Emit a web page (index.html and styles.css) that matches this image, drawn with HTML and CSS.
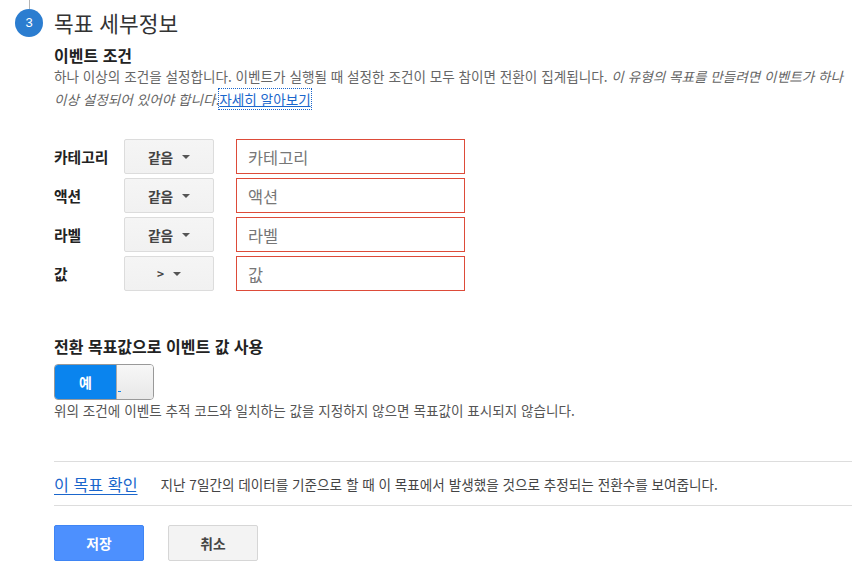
FILE: index.html
```html
<!DOCTYPE html>
<html lang="ko">
<head>
<meta charset="utf-8">
<link rel="stylesheet" href="styles.css">
</head>
<body>
<div class="page">
  <div class="step-head">
    <div class="step-marker">
      <div class="step-line"></div>
      <div class="step-num">3</div>
    </div>
    <h1 class="step-title">목표 세부정보</h1>
  </div>
  <div class="content">
    <h2 class="sec-title">이벤트 조건</h2>
    <p class="desc">하나 이상의 조건을 설정합니다. 이벤트가 실행될 때 설정한 조건이 모두 참이면 전환이 집계됩니다. <em>이 유형의 목표를 만들려면 이벤트가 하나 이상 설정되어 있어야 합니다.</em><a class="learn" href="#">자세히 알아보기</a></p>

    <div class="conds">
      <div class="cond">
        <span class="cond-label">카테고리</span>
        <div class="sel"><span>같음</span><i class="caret"></i></div>
        <div class="inp">카테고리</div>
      </div>
      <div class="cond">
        <span class="cond-label">액션</span>
        <div class="sel"><span>같음</span><i class="caret"></i></div>
        <div class="inp">액션</div>
      </div>
      <div class="cond">
        <span class="cond-label">라벨</span>
        <div class="sel"><span>같음</span><i class="caret"></i></div>
        <div class="inp">라벨</div>
      </div>
      <div class="cond">
        <span class="cond-label">값</span>
        <div class="sel"><span class="gt">&gt;</span><i class="caret"></i></div>
        <div class="inp">값</div>
      </div>
    </div>

    <h2 class="sec-title val-title">전환 목표값으로 이벤트 값 사용</h2>
    <div class="toggle">
      <div class="toggle-on">예</div>
      <div class="toggle-off"><span class="focus-mark"></span></div>
    </div>
    <p class="note">위의 조건에 이벤트 추적 코드와 일치하는 값을 지정하지 않으면 목표값이 표시되지 않습니다.</p>

    <div class="verify">
      <a class="verify-link" href="#">이 목표 확인</a>
      <span class="verify-text">지난 7일간의 데이터를 기준으로 할 때 이 목표에서 발생했을 것으로 추정되는 전환수를 보여줍니다.</span>
    </div>

    <div class="actions">
      <button class="btn btn-primary">저장</button>
      <button class="btn btn-default">취소</button>
    </div>
  </div>
</div>
</body>
</html>
```

FILE: styles.css
```css
* { box-sizing: border-box; }
html, body { margin: 0; padding: 0; background: #fff; }
body {
  font-family: "Noto Sans CJK KR", "Noto Sans", "Liberation Sans", sans-serif;
  color: #333;
}
.page { width: 867px; }

.step-head {
  display: flex;
  align-items: flex-end;
  gap: 11px;
  padding-left: 15px;
}
.step-marker {
  display: flex;
  flex-direction: column;
  align-items: center;
  width: 28px;
}
.step-line { width: 1px; height: 9px; background: #b5b5b5; }
.step-num {
  width: 28px; height: 28px; border-radius: 50%;
  background: #2b7dd0;
  color: #fff;
  font-size: 13px;
  line-height: 28px;
  text-align: center;
  font-family: "Liberation Sans", sans-serif;
}
.step-title {
  margin: 0;
  font-size: 21.4px;
  font-weight: 400;
  line-height: 28px;
  color: #333;
}

.content { padding-left: 54px; padding-right: 15px; }
.sec-title {
  margin: 8px 0 0;
  font-size: 16px;
  line-height: 20px;
  font-weight: 700;
  color: #222;
}
.desc {
  margin: 0;
  font-size: 13.6px;
  line-height: 23px;
  color: #666;
}
.desc em { font-style: italic; }
.learn {
  color: #1a66cc;
  text-decoration: underline;
  outline: 1px dotted #1a66cc;
  outline-offset: 0;
}

.conds {
  margin-top: 28px;
  display: flex;
  flex-direction: column;
  gap: 4px;
}
.cond { display: flex; align-items: center; }
.cond-label {
  width: 70px;
  font-size: 14.8px;
  font-weight: 700;
  color: #222;
}
.sel {
  width: 90px; height: 35px;
  border: 1px solid #dcdcdc;
  border-radius: 2px;
  background: linear-gradient(#f5f5f5, #f1f1f1);
  display: flex; align-items: center; justify-content: center;
  gap: 9px;
  font-size: 13.7px;
  font-weight: 700;
  color: #444;
}
.sel .gt { font-size: 12px; }
.caret {
  width: 0; height: 0;
  border-left: 4px solid transparent;
  border-right: 4px solid transparent;
  border-top: 4px solid #555;
}
.inp {
  margin-left: 22px;
  width: 229px; height: 35px;
  border: 1px solid #dd4b39;
  padding-left: 11px;
  display: flex; align-items: center;
  font-size: 16.4px;
  color: #777;
}

.val-title { margin-top: 45px; }
.toggle {
  margin-top: 8px;
  display: flex;
  width: 100px; height: 36px;
  border: 1px solid #999;
  border-radius: 4px;
  overflow: hidden;
}
.toggle-on {
  width: 61px;
  background: #0a84ee;
  color: #fff;
  font-size: 14px;
  font-weight: 700;
  display: flex; align-items: center; justify-content: center;
}
.toggle-off {
  flex: 1;
  background: linear-gradient(#f7f7f7, #e8e8e8);
  border-left: 1px solid #aaa;
  position: relative;
}
.focus-mark {
  position: absolute; left: 1px; bottom: 7px;
  width: 3px; height: 1px; background: #0a84ee;
}
.note {
  margin: 0;
  font-size: 13.6px;
  line-height: 20px;
  color: #555;
}

.verify {
  margin-top: 41px;
  border-top: 1px solid #ddd;
  border-bottom: 1px solid #ddd;
  height: 45px;
  display: flex;
  align-items: center;
  gap: 20px;
  width: 798px;
}
.verify-link {
  font-size: 16.2px;
  color: #1a66cc;
  text-decoration: underline;
  text-underline-offset: 3px;
  padding-right: 3px;
}
.verify-text { font-size: 13.6px; color: #444; }

.actions {
  margin-top: 19px;
  display: flex;
  gap: 24px;
}
.btn {
  width: 90px; height: 36px;
  border-radius: 2px;
  font-family: inherit;
  font-size: 13.8px;
  font-weight: 700;
  padding: 0;
  cursor: pointer;
}
.btn-primary { background: #4d90fe; border: 1px solid #3f85f4; color: #fff; }
.btn-default { background: #f3f3f3; border: 1px solid #d6d6d6; color: #444; }
```
